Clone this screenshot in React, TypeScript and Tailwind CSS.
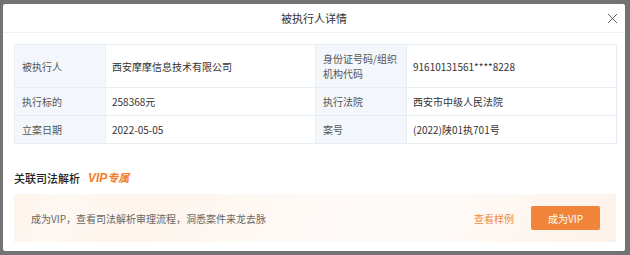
import { X } from "lucide-react";

const rows = [
  [
    { label: "被执行人", value: "西安摩摩信息技术有限公司" },
    { label: "身份证号码/组织机构代码", value: "91610131561****8228" },
  ],
  [
    { label: "执行标的", value: "258368元" },
    { label: "执行法院", value: "西安市中级人民法院" },
  ],
  [
    { label: "立案日期", value: "2022-05-05" },
    { label: "案号", value: "(2022)陕01执701号" },
  ],
];

const App = () => {
  return (
    <div className="w-[630px] h-[255px] bg-[#737373] pl-[3px] pt-[4px] font-['PingFang_SC','Noto_Sans_CJK_SC',sans-serif]">
      <div className="w-[622px] h-[247px] bg-white rounded-[2px] flex flex-col">
        {/* Header */}
        <div className="relative h-[29px] flex items-center justify-center border-b border-[#eef2f6]">
          <span className="text-[11px] text-[#333]">被执行人详情</span>
          <button className="absolute right-[4px] top-[6px] text-[#444]">
            <X className="w-[17px] h-[17px]" strokeWidth={1.2} />
          </button>
        </div>

        <div className="px-[11px] pt-[11px]">
          {/* Info table */}
          <table className="w-[602px] border-collapse text-[10px] leading-[15px] table-fixed">
            <colgroup>
              <col className="w-[91px]" />
              <col className="w-[210px]" />
              <col className="w-[91px]" />
              <col className="w-[210px]" />
            </colgroup>
            <tbody>
              {rows.map((row, i) => (
                <tr key={i}>
                  {row.map((cell) => (
                    <>
                      <td
                        key={cell.label}
                        className="border border-[#e6edf4] bg-[#f3f7fb] text-[#555] px-[7px] py-[6px] align-middle"
                      >
                        {cell.label}
                      </td>
                      <td
                        key={cell.value}
                        className="border border-[#e6edf4] text-[#333] px-[6px] py-[6px] align-middle"
                      >
                        {cell.value}
                      </td>
                    </>
                  ))}
                </tr>
              ))}
            </tbody>
          </table>

          {/* Related section */}
          <div className="mt-[25px] flex items-center gap-[8px]">
            <span className="text-[11px] font-medium text-[#222]">关联司法解析</span>
            <span className="text-[11px] font-bold italic text-[#f07d2c]">
              <span className="font-['Liberation_Sans',sans-serif] font-black text-[12px]">VIP</span>专属
            </span>
          </div>

          <div className="mt-[7px] h-[48px] w-[602px] flex items-center pl-[17px] pr-[16px] bg-[linear-gradient(115deg,#fdf3ea_0%,#fef8f3_8%,#fdf4ec_20%,#fef9f5_45%,#fefaf7_70%,#fdf2e9_100%)]">
            <span className="flex-1 text-[10px] text-[#666]">
              成为VIP，查看司法解析审理流程，洞悉案件来龙去脉
            </span>
            <span className="text-[10px] text-[#f0883f] mr-[17px]">查看样例</span>
            <button className="w-[69px] h-[24px] bg-[#f08439] text-white text-[10px] rounded-[2px]">
              成为VIP
            </button>
          </div>
        </div>
      </div>
    </div>
  );
};

export default App;
